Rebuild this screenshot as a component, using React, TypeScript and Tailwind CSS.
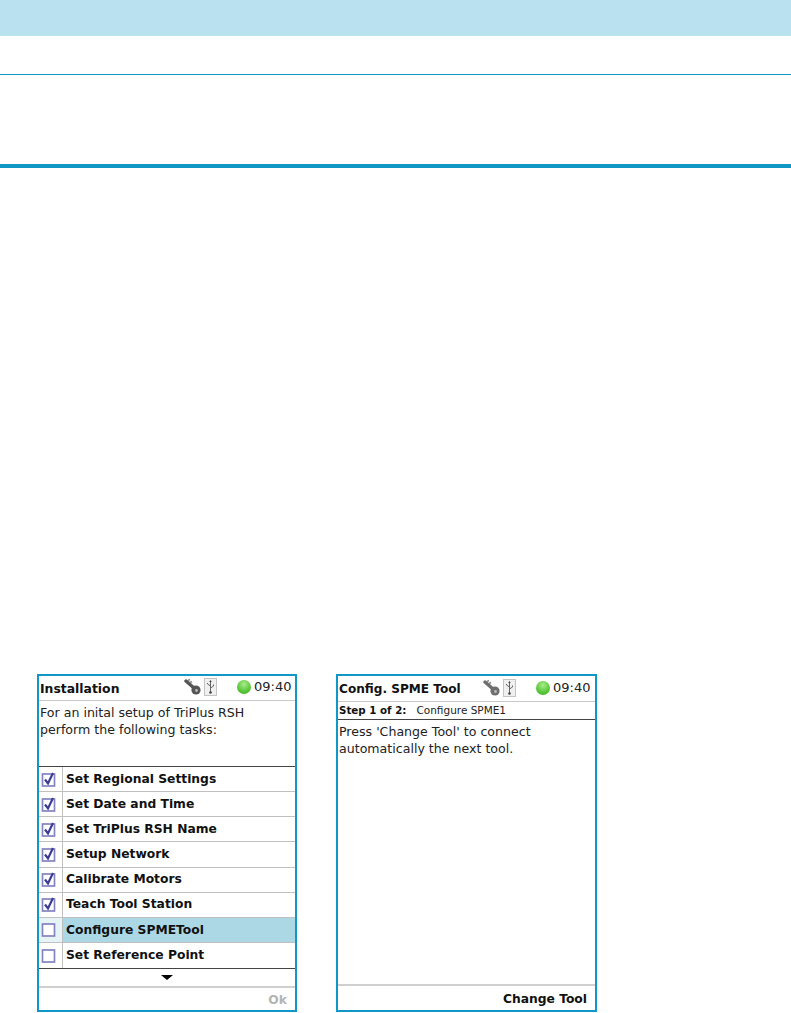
const font = "[font-family:'DejaVu_Sans',Verdana,sans-serif]";

function KeyIcon({ light }: { light?: boolean }) {
  const c = light ? "#6e6e6e" : "#555";
  return (
    <svg width="18" height="18" viewBox="0 0 18 18" className="shrink-0">
      <path d="M2 3 L10 10" stroke={c} strokeWidth="3.4" strokeLinecap="round" />
      <path d="M4 2.5 L6 1.5 M6 4.5 L8 3.5" stroke="#888" strokeWidth="1.4" />
      <circle cx="12" cy="12" r="4.6" fill={c} />
      <circle cx="12.5" cy="12.5" r="1.4" fill="#bbb" />
    </svg>
  );
}

function UsbIcon() {
  return (
    <svg width="13" height="18" viewBox="0 0 13 18" className="shrink-0">
      <rect x="0.5" y="0.5" width="12" height="17" fill="#f0f0f0" stroke="#c4c4c4" />
      <path d="M6.5 3 V15 M6.5 8 L3.5 6 V5 M6.5 10 L9.5 8 V6.5" stroke="#666" strokeWidth="1" fill="none" />
      <circle cx="6.5" cy="14.5" r="1.3" fill="#444" />
      <path d="M5.2 4 L6.5 2 L7.8 4 Z" fill="#444" />
    </svg>
  );
}

function Led() {
  return <span className="block w-[14px] h-[14px] rounded-full shrink-0 bg-[radial-gradient(circle_at_50%_30%,#a8ec8c,#58c638_60%,#3fa82a)]" />;
}

function StatusIcons({ light }: { light?: boolean }) {
  return (
    <div className="flex items-center shrink-0 pb-[2px]">
      <KeyIcon light={light} />
      <div className="ml-[2px]">
        <UsbIcon />
      </div>
      <div className="ml-[20px] mr-[3px]">
        <Led />
      </div>
      <span className="text-[13px] text-[#222]">09:40</span>
    </div>
  );
}

function CheckBox({ checked }: { checked: boolean }) {
  return (
    <svg width="15" height="15" viewBox="0 0 15 15">
      <rect x="1.5" y="2" width="12" height="12" fill="#fff" stroke="#8383c2" strokeWidth="1.7" />
      {checked && <path d="M4 7.5 L7 11.5 L12 1" stroke="#3c3c96" strokeWidth="2.2" fill="none" />}
    </svg>
  );
}

const tasks = [
  { label: "Set Regional Settings", checked: true },
  { label: "Set Date and Time", checked: true },
  { label: "Set TriPlus RSH Name", checked: true },
  { label: "Setup Network", checked: true },
  { label: "Calibrate Motors", checked: true },
  { label: "Teach Tool Station", checked: true },
  { label: "Configure SPMETool", checked: false, active: true },
  { label: "Set Reference Point", checked: false },
];

export default function App() {
  return (
    <div className={`w-[791px] h-[1013px] bg-white overflow-hidden flex flex-col ${font}`}>
      <div className="h-9 bg-[#b9e1f0]" />
      <div className="h-[38px]" />
      <div className="h-px bg-[#1097c5]" />
      <div className="h-[89px]" />
      <div className="h-1 bg-[#1097c5]" />
      <div className="h-[506px]" />
      <div className="flex pl-[37px] gap-[39px]">
        <div className="w-[260px] h-[338px] border-2 border-[#1097c5] flex flex-col">
          <div className="h-[25px] flex items-center pl-[1px] border-b border-[#c8c8c8] shrink-0">
            <span className="text-[12.4px] font-bold text-[#111] w-[144px] pt-[2px]">Installation</span>
            <StatusIcons />
          </div>
          <div className="h-[65px] shrink-0 pl-[1px] pt-[3px] text-[12.6px] leading-[17px] text-[#222]">
            For an inital setup of TriPlus RSH<br />perform the following tasks:
          </div>
          <div className="border-t border-[#444]">
            {tasks.map((t, i) => (
              <div key={t.label} className={`h-[25.125px] flex ${i < tasks.length - 1 ? "border-b border-[#c0c0c0]" : ""}`}>
                <div className={`w-[24px] flex items-center justify-start pl-[2px] border-r border-[#c0c0c0] shrink-0 ${t.active ? "bg-[#e6f4f8]" : ""}`}>
                  <CheckBox checked={t.checked} />
                </div>
                <div className={`flex-1 flex items-center pl-[3px] text-[12.3px] font-bold text-[#111] ${t.active ? "bg-[#acd8e6]" : ""}`}>
                  {t.label}
                </div>
              </div>
            ))}
          </div>
          <div className="h-[18px] shrink-0 border-t border-[#444] flex items-center justify-center">
            <span className="w-0 h-0 border-x-[6px] border-x-transparent border-t-[5px] border-t-black" />
          </div>
          <div className="flex-1 border-t-2 border-[#d0d0d0] flex items-center justify-end pr-[8px] pt-[2px] text-[12.3px] font-bold text-[#b4b4b4]">
            Ok
          </div>
        </div>
        <div className="w-[261px] h-[338px] border-2 border-[#1097c5] flex flex-col">
          <div className="h-[26px] flex items-center pl-[1px] border-b border-[#c8c8c8] shrink-0">
            <span className="text-[12.1px] font-bold text-[#111] w-[144px] pt-[1px]">Config. SPME Tool</span>
            <StatusIcons light />
          </div>
          <div className="h-[18px] shrink-0 flex items-center pl-[1px] gap-[10px] border-b border-[#444] pt-[1px]">
            <span className="text-[10.3px] font-bold text-[#111]">Step 1 of 2:</span>
            <span className="text-[10.5px] text-[#222]">Configure SPME1</span>
          </div>
          <div className="flex-1 pl-[1px] pt-[3px] text-[12.6px] leading-[17px] text-[#222]">
            Press 'Change Tool' to connect<br />automatically the next tool.
          </div>
          <div className="h-[26px] shrink-0 border-t-2 border-[#d0d0d0] flex items-center justify-end pr-[8px] pt-[2px] text-[12.3px] font-bold text-[#111]">
            Change Tool
          </div>
        </div>
      </div>
    </div>
  );
}
